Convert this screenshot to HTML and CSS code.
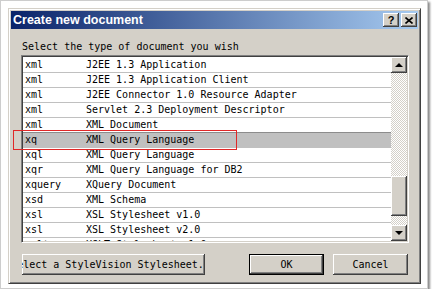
FILE: index.html
```html
<!DOCTYPE html>
<html lang="en">
<head>
    <meta charset="UTF-8">
    <title>Create new document</title>
    <link rel="stylesheet" href="styles.css">
</head>
<body>
    <div class="frame">
        <div class="dialog">
            <div class="titlebar">
                <span class="title">Create new document</span>
                <div class="title-buttons">
                    <div class="tbtn help">?</div>
                    <div class="tbtn">
                        <svg width="8" height="7" viewBox="0 0 8 7"><path d="M0.5 0.5 L7.5 6.5 M7.5 0.5 L0.5 6.5" stroke="#000" stroke-width="1.6"/></svg>
                    </div>
                </div>
            </div>

            <div class="body">
                <div class="label">Select the type of document you wish</div>

                <div class="list">
                    <div class="rows">
                        <div class="row"><span class="ext">xml</span><span>J2EE 1.3 Application</span></div>
                        <div class="row"><span class="ext">xml</span><span>J2EE 1.3 Application Client</span></div>
                        <div class="row"><span class="ext">xml</span><span>J2EE Connector 1.0 Resource Adapter</span></div>
                        <div class="row"><span class="ext">xml</span><span>Servlet 2.3 Deployment Descriptor</span></div>
                        <div class="row"><span class="ext">xml</span><span>XML Document</span></div>
                        <div class="row sel"><span class="ext">xq</span><span>XML Query Language</span></div>
                        <div class="row"><span class="ext">xql</span><span>XML Query Language</span></div>
                        <div class="row"><span class="ext">xqr</span><span>XML Query Language for DB2</span></div>
                        <div class="row"><span class="ext">xquery</span><span>XQuery Document</span></div>
                        <div class="row"><span class="ext">xsd</span><span>XML Schema</span></div>
                        <div class="row"><span class="ext">xsl</span><span>XSL Stylesheet v1.0</span></div>
                        <div class="row"><span class="ext">xsl</span><span>XSL Stylesheet v2.0</span></div>
                        <div class="row"><span class="ext">xslt</span><span>XSLT Stylesheet v1.0</span></div>
                    </div>
                    <div class="scrollbar">
                        <div class="sbtn"><span class="arrow-up"></span></div>
                        <div class="track">
                            <div class="thumb"></div>
                        </div>
                        <div class="sbtn"><span class="arrow-down"></span></div>
                    </div>
                </div>

                <div class="button-row">
                    <button class="btn btn-wide">Select a StyleVision Stylesheet...</button>
                    <button class="btn btn-default">OK</button>
                    <button class="btn">Cancel</button>
                </div>
            </div>
        </div>

        <!-- annotation box -->
        <div class="highlight"></div>
    </div>
</body>
</html>
```

FILE: styles.css
```css
body {
    margin: 0;
    background: #fff;
    font-family: "DejaVu Sans Mono", "Liberation Mono", monospace;
    font-size: 10px;
    color: #000;
}
.frame {
    position: relative;
    width: 428px;
    height: 289px;
    box-sizing: border-box;
    padding: 7px 0 0 7px;
    border: 1px solid #cdcdcd;
    background: #fff;
    box-shadow: 2px 2px 2px rgba(0, 0, 0, 0.45);
}
.dialog {
    width: 413px;
    height: 276px;
    box-sizing: border-box;
    padding: 2px;
    border: 1px solid;
    border-color: #d4d0c8 #404040 #404040 #d4d0c8;
    box-shadow: inset 1px 1px #fff, inset -1px -1px #808080;
    background: #d4d0c8;
    display: flex;
    flex-direction: column;
}
.titlebar {
    height: 18px;
    display: flex;
    align-items: center;
    justify-content: space-between;
    padding: 0 1px 0 2px;
    background: linear-gradient(to right, #0a246a, #a6caf0);
}
.title {
    font-family: "Liberation Sans", Arial, sans-serif;
    font-weight: bold;
    font-size: 12.5px;
    color: #fff;
}
.title-buttons {
    display: flex;
    gap: 2px;
}
.tbtn {
    width: 16px;
    height: 14px;
    box-sizing: border-box;
    display: flex;
    align-items: center;
    justify-content: center;
    background: #d4d0c8;
    box-shadow: inset -1px -1px #404040, inset 1px 1px #fff, inset -2px -2px #808080;
}
.help {
    font-family: "Liberation Sans", Arial, sans-serif;
    font-weight: bold;
    font-size: 11px;
    line-height: 14px;
}
.body {
    flex: 1;
    padding: 12px 9px 0 10px;
}
.label {
    line-height: 12px;
    margin: 0 0 2px 1px;
    white-space: nowrap;
}
.list {
    display: flex;
    width: 388px;
    height: 188px;
    box-sizing: border-box;
    padding: 1px;
    border: 1px solid;
    border-color: #808080 #fff #fff #808080;
    box-shadow: inset 1px 1px #404040, inset -1px -1px #d4d0c8;
    background: #fff;
}
.rows {
    flex: 1;
    padding-top: 1px;
    overflow: hidden;
}
.row {
    display: flex;
    height: 14px;
    line-height: 14px;
    border-bottom: 1px solid #c0c0c0;
    white-space: nowrap;
    overflow: hidden;
}
.row.sel {
    background: #c0c0c0;
    box-shadow: 0 -1px 0 #8c8c8c;
}
.ext {
    width: 61px;
    padding-left: 2px;
    flex-shrink: 0;
}
.scrollbar {
    width: 16px;
    display: flex;
    flex-direction: column;
}
.sbtn {
    height: 16px;
    flex-shrink: 0;
    display: flex;
    align-items: center;
    justify-content: center;
    background: #d4d0c8;
    box-shadow: inset -1px -1px #404040, inset 1px 1px #fff, inset -2px -2px #808080;
}
.arrow-up {
    border-left: 4px solid transparent;
    border-right: 4px solid transparent;
    border-bottom: 4px solid #000;
}
.arrow-down {
    border-left: 4px solid transparent;
    border-right: 4px solid transparent;
    border-top: 4px solid #000;
}
.track {
    flex: 1;
    padding-top: 103px;
    background: repeating-conic-gradient(#fff 0 25%, #d4d0c8 0 50%) 0 0 / 2px 2px;
}
.thumb {
    height: 40px;
    background: #d4d0c8;
    box-shadow: inset -1px -1px #404040, inset 1px 1px #fff, inset -2px -2px #808080;
}
.button-row {
    display: flex;
    gap: 9px;
    margin-top: 11px;
    padding: 0 1px;
}
.btn {
    height: 21px;
    width: 75px;
    box-sizing: border-box;
    display: flex;
    align-items: center;
    justify-content: center;
    overflow: hidden;
    white-space: nowrap;
    padding: 0;
    border: none;
    font-family: inherit;
    font-size: 10px;
    color: #000;
    background: #d4d0c8;
    box-shadow: inset -1px -1px #404040, inset 1px 1px #fff, inset -2px -2px #808080;
}
.btn-wide {
    width: 183px;
    margin-right: auto;
}
.btn-default {
    border: 1px solid #000;
}
.highlight {
    position: absolute;
    left: 12px;
    top: 129px;
    width: 224px;
    height: 20px;
    box-sizing: border-box;
    border: 1px solid #e02828;
}
```
